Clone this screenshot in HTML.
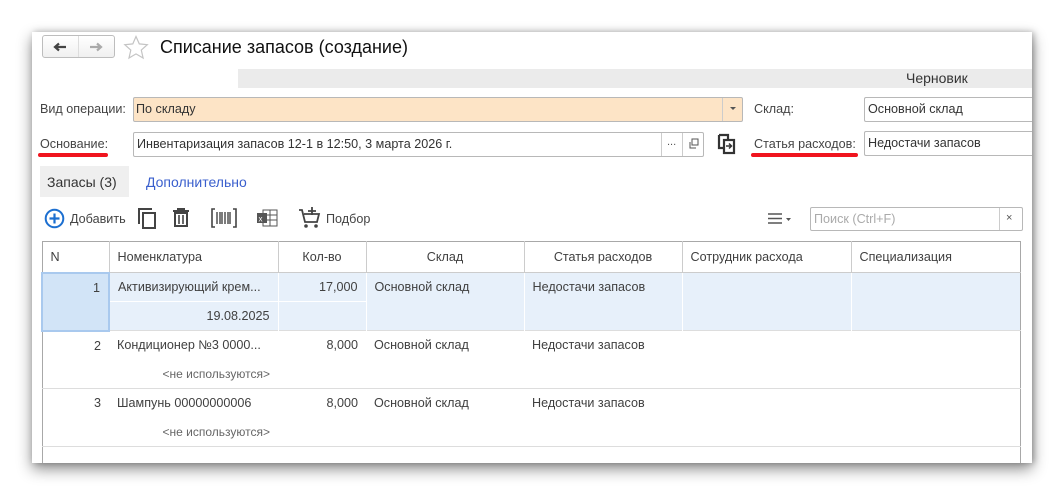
<!DOCTYPE html>
<html><head><meta charset="utf-8"><style>
*{box-sizing:border-box;margin:0;padding:0}
body{width:1064px;height:495px;background:#fff;position:relative;overflow:hidden;font-family:"Liberation Sans",Arial,sans-serif;font-size:12.6px;color:#333}
.win{position:absolute;left:32px;top:32px;width:1000px;height:431px;background:#fff;box-shadow:0 6px 14px rgba(0,0,0,.45),2px 0 6px rgba(0,0,0,.25)}
.a{position:absolute;white-space:nowrap}
.inp{position:absolute;border:1px solid #b8b8b8;border-radius:2px;background:#fff;height:25px;line-height:23px;padding-left:3px;color:#333}
.red{position:absolute;height:4px;background:#f0141e;border-radius:2px}
table{position:absolute;left:41px;top:241px;width:980px;border-collapse:collapse;border:1px solid #a8a8a8;border-bottom:none;table-layout:fixed}
td,th{font-weight:normal;height:29px;padding:0 8px;vertical-align:middle;color:#404040;white-space:nowrap;overflow:hidden}
th{border-left:1px solid #ccc;border-bottom:1px solid #ccc;height:31px;text-align:center}
.sel td{background:#e7f0fa;border-left:1px solid #fff}
.r{text-align:right}
.g{color:#666;font-size:12px}
</style></head><body>
<div class="win"></div>
<!-- nav -->
<div class="a" style="left:42px;top:35px;width:73px;height:23px;border:1px solid #bdbdbd;border-radius:3px;background:linear-gradient(#fff,#f0f0f0)"></div>
<div class="a" style="left:78px;top:36px;width:1px;height:21px;background:#ddd"></div>
<svg class="a" style="left:53px;top:42px" width="14" height="10"><path d="M2 5h11M6 1.5L2 5l4 3.5" stroke="#444" stroke-width="2.2" fill="none"/></svg>
<svg class="a" style="left:89px;top:42px" width="14" height="10"><path d="M1 5h11M8 1.5L12 5 8 8.5" stroke="#aaa" stroke-width="2.2" fill="none"/></svg>
<svg class="a" style="left:123px;top:35px" width="26" height="25"><path d="M13 1.5l3.3 7.4 8 .8-6 5.4 1.8 7.9L13 18.9 6 23l1.8-7.9-6-5.4 8-.8z" fill="none" stroke="#c4c4c4" stroke-width="1.2"/></svg>
<div class="a" style="left:160px;top:37px;font-size:18px;color:#111">Списание запасов (создание)</div>
<div class="a" style="left:238px;top:69px;width:794px;height:19px;background:#ebebeb"></div>
<div class="a" style="left:906px;top:70px;font-size:14px;color:#333">Черновик</div>
<!-- row 1 -->
<div class="a" style="left:40px;top:102px;color:#444">Вид операции:</div>
<div class="inp" style="left:133px;top:97px;width:610px;background:#fde4c6"></div>
<div class="a" style="left:136px;top:102px">По складу</div>
<div class="a" style="left:722px;top:98px;width:1px;height:23px;background:#ccc"></div>
<div class="a" style="left:730px;top:107px;border:3px solid transparent;border-top:3px solid #555"></div>
<div class="a" style="left:754px;top:102px;color:#444">Склад:</div>
<div class="inp" style="left:864px;top:97px;width:168px;border-right:none;border-radius:2px 0 0 2px">Основной склад</div>
<!-- row 2 -->
<div class="a" style="left:40px;top:137px;color:#444">Основание:</div>
<div class="red" style="left:38px;top:153px;width:70px"></div>
<div class="inp" style="left:133px;top:132px;width:571px">Инвентаризация запасов 12-1 в 12:50, 3 марта 2026 г.</div>
<div class="a" style="left:661px;top:133px;width:1px;height:23px;background:#ccc"></div>
<div class="a" style="left:682px;top:133px;width:1px;height:23px;background:#ccc"></div>
<div class="a" style="left:667px;top:136px;font-size:11px;color:#555">...</div>
<svg class="a" style="left:688px;top:138px" width="11" height="11"><rect x="4" y="1" width="6" height="6" fill="none" stroke="#555"/><path d="M2 4v6h6" fill="none" stroke="#555"/></svg>
<svg class="a" style="left:716px;top:133px" width="22" height="24"><path d="M3 2h9v4M3 2v13h4" fill="none" stroke="#333" stroke-width="2.2"/><rect x="8" y="7" width="10" height="13" fill="none" stroke="#333" stroke-width="2.2"/><path d="M10 13h5M13 10.5l2.5 2.5-2.5 2.5" fill="none" stroke="#333" stroke-width="1.5"/></svg>
<div class="a" style="left:754px;top:137px;color:#444">Статья расходов:</div>
<div class="red" style="left:751px;top:153px;width:107px"></div>
<div class="inp" style="left:864px;top:131px;width:168px;border-right:none;border-radius:2px 0 0 2px">Недостачи запасов</div>
<!-- tabs -->
<div class="a" style="left:40px;top:166px;width:89px;height:31px;background:#efefef"></div>
<div class="a" style="left:47px;top:174px;font-size:14px;color:#333">Запасы (3)</div>
<div class="a" style="left:146px;top:174px;font-size:14px;color:#3a5fcd">Дополнительно</div>
<!-- toolbar -->
<svg class="a" style="left:44px;top:208px" width="21" height="21"><circle cx="10.5" cy="10.5" r="8.8" fill="none" stroke="#1c6fd0" stroke-width="2"/><path d="M10.5 5.5v10M5.5 10.5h10" stroke="#1c6fd0" stroke-width="2.2"/></svg>
<div class="a" style="left:70px;top:212px;color:#444">Добавить</div>
<svg class="a" style="left:137px;top:207px" width="22" height="24"><path d="M2 17V2h13" fill="none" stroke="#444" stroke-width="2"/><rect x="6" y="6" width="12" height="15" fill="none" stroke="#444" stroke-width="2"/></svg>
<svg class="a" style="left:172px;top:208px" width="18" height="20"><path d="M1 3h16M6 3V1h6v2" fill="none" stroke="#444" stroke-width="2"/><path d="M3 5h12v13H3z" fill="none" stroke="#444" stroke-width="2"/><path d="M7 7v9M11 7v9" stroke="#444" stroke-width="1.6"/></svg>
<svg class="a" style="left:211px;top:208px" width="26" height="20"><path d="M4 1H1v18h3M22 1h3v18h-3" fill="none" stroke="#444" stroke-width="1.6"/><path d="M6 4v12M9 4v12M11 4v12M14 4v12M17 4v12M19 4v12" stroke="#444" stroke-width="1.4"/></svg>
<svg class="a" style="left:256px;top:209px" width="22" height="18"><rect x="7" y="1" width="14" height="16" fill="#fff" stroke="#555"/><path d="M7 6h14M7 11h14M14 1v16" stroke="#555"/><rect x="1" y="4" width="10" height="10" fill="#555"/><text x="2.5" y="12.5" font-size="8" fill="#fff" font-family="Liberation Sans">x</text></svg>
<svg class="a" style="left:298px;top:206px" width="24" height="24"><path d="M1 4h3l3 12h12l2-8H6" fill="none" stroke="#444" stroke-width="1.8"/><path d="M14 1v8M10 5h8" stroke="#444" stroke-width="1.8"/><circle cx="8" cy="20" r="1.8" fill="#444"/><circle cx="18" cy="20" r="1.8" fill="#444"/></svg>
<div class="a" style="left:326px;top:212px;color:#444">Подбор</div>
<svg class="a" style="left:768px;top:213px" width="26" height="12"><path d="M0 1h14M0 5.5h14M0 10h14" stroke="#555" stroke-width="1.6"/><path d="M18 5h5l-2.5 3z" fill="#555"/></svg>
<div class="inp" style="left:810px;top:207px;width:213px;height:24px;color:#aaa;line-height:22px">Поиск (Ctrl+F)</div>
<div class="a" style="left:999px;top:208px;width:1px;height:22px;background:#ccc"></div>
<div class="a" style="left:1006px;top:212px;font-size:11px;color:#555">×</div>
<!-- table -->
<table>
<colgroup><col style="width:67px"><col style="width:169px"><col style="width:88px"><col style="width:158px"><col style="width:158px"><col style="width:169px"><col></colgroup>
<tr><th style="text-align:left;border-left:none">N</th><th style="text-align:left">Номенклатура</th><th>Кол-во</th><th>Склад</th><th>Статья расходов</th><th style="text-align:left">Сотрудник расхода</th><th style="text-align:left">Специализация</th></tr>
<tr class="sel"><td rowspan="2" class="r" style="background:#d2e4f7;border:2px solid #a9c9ee;vertical-align:top;padding-top:7px">1</td><td style="border-bottom:1px solid #fff">Активизирующий крем...</td><td class="r" style="border-bottom:1px solid #fff">17,000</td><td rowspan="2" style="vertical-align:top;padding-top:7px">Основной склад</td><td rowspan="2" style="vertical-align:top;padding-top:7px">Недостачи запасов</td><td rowspan="2"></td><td rowspan="2"></td></tr>
<tr class="sel"><td class="r">19.08.2025</td><td></td></tr>
<tr style="border-top:1px solid #ddd"><td class="r">2</td><td>Кондиционер №3 0000...</td><td class="r">8,000</td><td>Основной склад</td><td>Недостачи запасов</td><td></td><td></td></tr>
<tr><td></td><td class="r g">&lt;не используются&gt;</td><td colspan="5"></td></tr>
<tr style="border-top:1px solid #ddd"><td class="r">3</td><td>Шампунь 00000000006</td><td class="r">8,000</td><td>Основной склад</td><td>Недостачи запасов</td><td></td><td></td></tr>
<tr style="border-bottom:1px solid #ddd"><td></td><td class="r g">&lt;не используются&gt;</td><td colspan="5"></td></tr>
<tr><td colspan="7" style="height:16px"></td></tr>
</table>
</body></html>
